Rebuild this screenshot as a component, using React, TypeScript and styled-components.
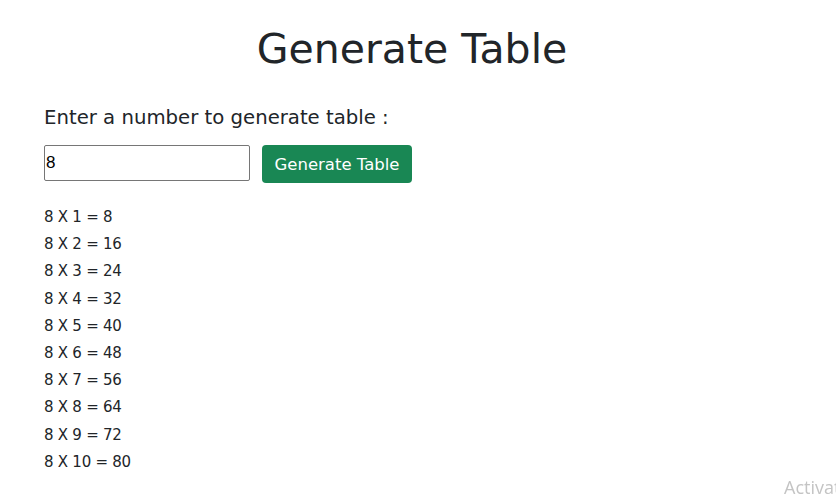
import React from "react";
import styled, { createGlobalStyle } from "styled-components";

const Global = createGlobalStyle`
  html, body { margin: 0; padding: 0; background: #fff; }
  body { font-family: "DejaVu Sans", sans-serif; color: #212529; }
`;

const Page = styled.div`
  width: 836px;
  height: 501px;
  box-sizing: border-box;
  padding: 25px 44px 0 44px;
  overflow: hidden;
`;

const Title = styled.h1`
  margin: 0 12px 0 0;
  text-align: center;
  font-size: 41px;
  font-weight: 400;
  line-height: 48px;
  color: #212529;
`;

const Label = styled.h5`
  margin: 33px 0 0 0;
  font-size: 19.7px;
  font-weight: 400;
  line-height: 24px;
  color: #212529;
`;

const Form = styled.div`
  display: flex;
  align-items: flex-start;
  gap: 12px;
  margin-top: 15px;
`;

const Input = styled.input`
  width: 206px;
  height: 36px;
  box-sizing: border-box;
  border: 1px solid #767676;
  border-radius: 2px;
  padding: 0 1px;
  font-family: "Liberation Sans", Arial, sans-serif;
  font-size: 17px;
  color: #000;
  outline: none;
`;

const Button = styled.button`
  height: 38px;
  width: 150px;
  border: none;
  border-radius: 4px;
  background: #198754;
  color: #fff;
  font-family: "DejaVu Sans", sans-serif;
  font-size: 16.5px;
  padding: 0;
  cursor: pointer;
`;

const List = styled.div`
  margin-top: 21px;
  display: flex;
  flex-direction: column;
`;

const Row = styled.p`
  margin: 0;
  font-size: 15px;
  letter-spacing: -0.25px;
  line-height: 27.2px;
  color: #212529;
`;

const Watermark = styled.div`
  position: fixed;
  left: 784px;
  top: 475px;
  font-family: "Open Sans", sans-serif;
  font-size: 18px;
  color: #c4c4c4;
  white-space: nowrap;
`;

export default function App() {
  const n = 8;
  const rows = Array.from({ length: 10 }, (_, i) => i + 1);
  return (
    <>
      <Global />
      <Page>
        <Title>Generate Table</Title>
        <Label>Enter a number to generate table :</Label>
        <Form>
          <Input defaultValue="8" />
          <Button>Generate Table</Button>
        </Form>
        <List>
          {rows.map((i) => (
            <Row key={i}>
              {n} X {i} = {n * i}
            </Row>
          ))}
        </List>
      </Page>
      <Watermark>Activate Windows</Watermark>
    </>
  );
}
